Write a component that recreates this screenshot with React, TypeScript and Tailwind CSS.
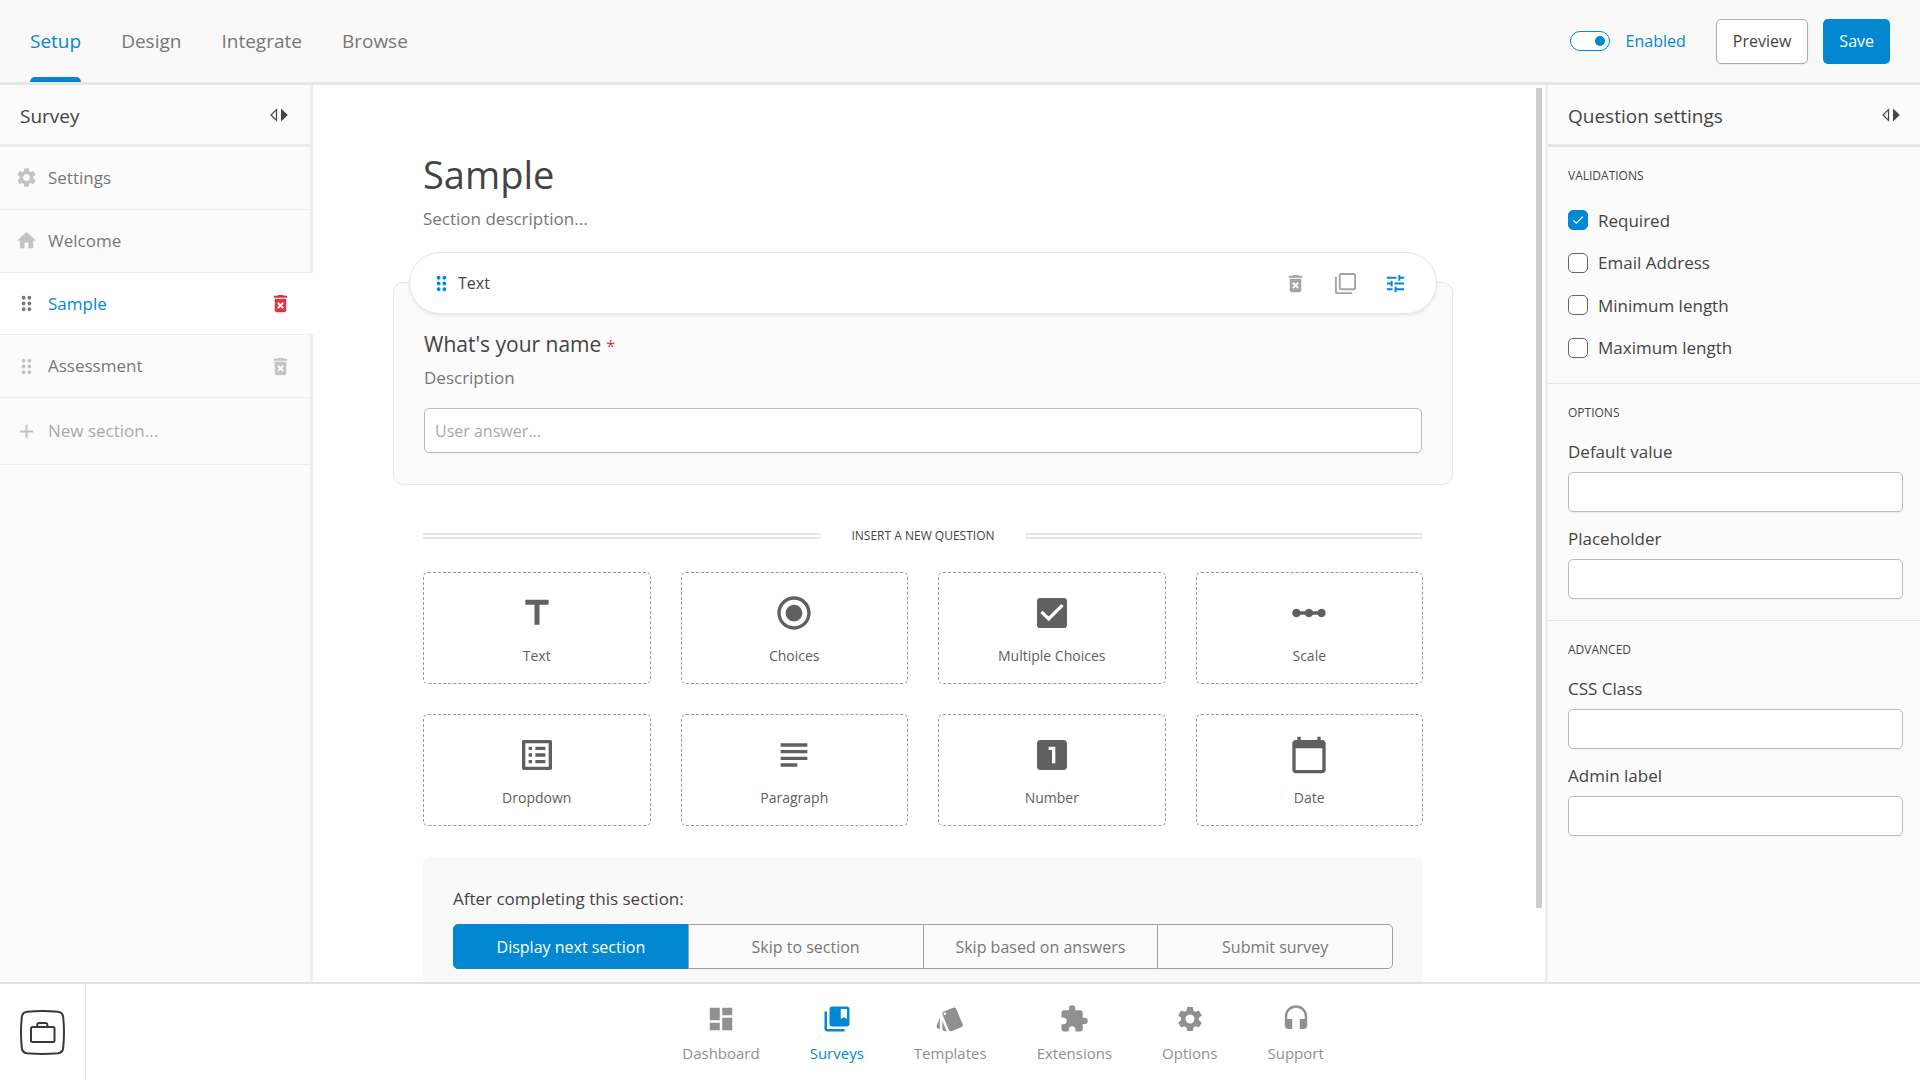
import { useState } from "react";
import type { ReactNode } from "react";
import type { IconType } from "react-icons";
import {
  MdAdd,
  MdCalendarToday,
  MdCheck,
  MdCheckBox,
  MdCollectionsBookmark,
  MdDashboard,
  MdDeleteForever,
  MdDragIndicator,
  MdExtension,
  MdFilterNone,
  MdHeadset,
  MdHome,
  MdLinearScale,
  MdListAlt,
  MdLooksOne,
  MdRadioButtonChecked,
  MdSettings,
  MdStyle,
  MdSubject,
  MdTitle,
  MdTune,
} from "react-icons/md";

const tabs = ["Setup", "Design", "Integrate", "Browse"];

const questionTypes: { label: string; icon: IconType }[] = [
  { label: "Text", icon: MdTitle },
  { label: "Choices", icon: MdRadioButtonChecked },
  { label: "Multiple Choices", icon: MdCheckBox },
  { label: "Scale", icon: MdLinearScale },
  { label: "Dropdown", icon: MdListAlt },
  { label: "Paragraph", icon: MdSubject },
  { label: "Number", icon: MdLooksOne },
  { label: "Date", icon: MdCalendarToday },
];

const navItems: { label: string; icon: IconType }[] = [
  { label: "Dashboard", icon: MdDashboard },
  { label: "Surveys", icon: MdCollectionsBookmark },
  { label: "Templates", icon: MdStyle },
  { label: "Extensions", icon: MdExtension },
  { label: "Options", icon: MdSettings },
  { label: "Support", icon: MdHeadset },
];

const nextSteps = ["Display next section", "Skip to section", "Skip based on answers", "Submit survey"];

function CollapseIcon() {
  return (
    <svg width="18" height="14" viewBox="0 0 18 14" aria-hidden="true">
      <path d="M6.5 1.6v10.8L1 7z" fill="none" stroke="#444" strokeWidth="1.2" />
      <path d="M11 0.5v13L17.8 7z" fill="#444" />
    </svg>
  );
}

function Logo() {
  return (
    <svg width="45" height="45" viewBox="0 0 45 45" fill="none" stroke="#343a40" aria-hidden="true">
      <path
        d="M7 1.8Q22.5 0.2 38 1.8Q42.6 2.4 43.2 7Q44.8 22.5 43.2 38Q42.6 42.6 38 43.2Q22.5 44.8 7 43.2Q2.4 42.6 1.8 38Q0.2 22.5 1.8 7Q2.4 2.4 7 1.8Z"
        strokeWidth="2"
      />
      <rect x="11" y="17" width="23.5" height="15" rx="1.5" strokeWidth="2" />
      <path d="M17.3 17v-2.2q0-1.8 1.8-1.8h6.4q1.8 0 1.8 1.8V17" strokeWidth="2" />
    </svg>
  );
}

function PanelHeader({ title, label, className }: { title: string; label: string; className: string }) {
  return (
    <div className={`flex h-[62px] shrink-0 items-center justify-between border-b-[3px] pl-5 ${className}`}>
      <h2 className="pt-0.5 text-[19px] leading-7 text-[#444]">{title}</h2>
      <button type="button" aria-label={label}>
        <CollapseIcon />
      </button>
    </div>
  );
}

function SectionItem({
  icon: Icon,
  label,
  active = false,
  removable = false,
}: {
  icon: IconType;
  label: string;
  active?: boolean;
  removable?: boolean;
}) {
  return (
    <li
      className={
        active
          ? "relative z-10 -mr-[3px] flex items-center border-b border-[#eee] bg-white pr-[21px] pl-[15px]"
          : "flex items-center border-b border-[#eee] pr-[18px] pl-[15px]"
      }
    >
      <a href="#" className="flex flex-1 items-center gap-[10px]">
        <Icon size={23} className={active ? "text-[#777]" : "text-[#c3c3c3]"} />
        <span className={active ? "text-[17px] text-[#0288d1]" : "text-[17px] text-[#777]"}>{label}</span>
      </a>
      {removable && (
        <button type="button" aria-label={`Delete ${label}`} className={active ? "text-[#dc3545]" : "text-[#c3c3c3]"}>
          <MdDeleteForever size={23} />
        </button>
      )}
    </li>
  );
}

function CheckRow({ label, defaultChecked = false }: { label: string; defaultChecked?: boolean }) {
  return (
    <label className="flex items-center gap-[10px] text-[17px] text-[#444]">
      <span className="relative h-5 w-5">
        <input
          type="checkbox"
          defaultChecked={defaultChecked}
          className="peer block h-5 w-5 appearance-none rounded-[5px] border border-[#666] bg-white checked:border-[#0288d1] checked:bg-[#0288d1]"
        />
        <MdCheck size={14} className="pointer-events-none absolute top-[3px] left-[3px] hidden text-white peer-checked:block" />
      </span>
      {label}
    </label>
  );
}

function SettingsGroup({ title, children, last = false }: { title: string; children: ReactNode; last?: boolean }) {
  return (
    <section className={last ? "pt-[19px] pr-[17px] pb-5 pl-5" : "border-b border-[#e6e6e6] pt-[19px] pr-[17px] pl-5"}>
      <h3 className="text-xs leading-5 text-[#444] uppercase">{title}</h3>
      {children}
    </section>
  );
}

function Field({ label }: { label: string }) {
  return (
    <label className="block text-[17px] leading-6 text-[#444]">
      {label}
      <input
        type="text"
        className="mt-2 block h-10 w-full rounded-[5px] border border-[#bbb] bg-white px-3 shadow-[0_1px_1px_rgba(0,0,0,0.05)]"
      />
    </label>
  );
}

export default function App() {
  const [tab, setTab] = useState("Setup");
  const [step, setStep] = useState("Display next section");

  return (
    <div className="flex h-screen flex-col bg-white font-['Open_Sans',sans-serif] text-[#444]">
      <header className="flex h-[85px] shrink-0 items-stretch justify-between border-b-[3px] border-[#e6e6e6] bg-[#f9f9f9] px-[30px]">
        <nav className="flex gap-10">
          {tabs.map((name) => (
            <button
              key={name}
              type="button"
              onClick={() => setTab(name)}
              className={
                name === tab
                  ? "flex flex-col items-stretch text-[19px] text-[#0288d1]"
                  : "flex flex-col items-stretch text-[19px] text-[#777]"
              }
            >
              <span className="flex flex-1 items-center pt-1.5">{name}</span>
              <span className={name === tab ? "h-[5px] rounded-t-[5px] bg-[#0288d1]" : "h-[5px]"} />
            </button>
          ))}
        </nav>
        <div className="flex items-center">
          <label className="mr-[30px] flex items-center gap-4 text-base text-[#0288d1]">
            <input
              type="checkbox"
              role="switch"
              defaultChecked
              className="flex h-5 w-10 appearance-none items-center rounded-full border border-[#0288d1] bg-white px-1 before:h-[10px] before:w-[10px] before:rounded-full before:bg-[#0288d1] checked:justify-end"
            />
            Enabled
          </label>
          <button
            type="button"
            className="mr-[15px] h-[45px] rounded-[5px] border border-[#aaa] bg-white px-4 text-base text-[#444] shadow-[0_1px_2px_rgba(0,0,0,0.06)]"
          >
            Preview
          </button>
          <button type="button" className="h-[45px] rounded-[5px] bg-[#0288d1] px-4 text-base text-white">
            Save
          </button>
        </div>
      </header>

      <div className="flex min-h-0 flex-1">
        <aside className="w-[313px] shrink-0 border-r-[3px] border-[#eee] bg-[#fbfbfb]">
          <PanelHeader title="Survey" label="Collapse survey panel" className="border-[#eee] pr-[22px]" />
          <ul className="grid h-[251px] grid-rows-4">
            <SectionItem icon={MdSettings} label="Settings" />
            <SectionItem icon={MdHome} label="Welcome" />
            <SectionItem icon={MdDragIndicator} label="Sample" active removable />
            <SectionItem icon={MdDragIndicator} label="Assessment" removable />
          </ul>
          <label className="flex h-[67px] items-center gap-[10px] border-b border-[#eee] pr-[18px] pl-[15px] text-[17px]">
            <MdAdd size={23} className="shrink-0 text-[#c3c3c3]" />
            <input
              type="text"
              aria-label="New section"
              placeholder="New section..."
              className="w-full bg-transparent text-[#444] outline-none placeholder:text-[#aaa]"
            />
          </label>
        </aside>

        <main className="flex min-w-0 flex-1">
          <div className="flex-1 overflow-y-auto px-[30px] pt-16 [scrollbar-width:none]">
            <div className="mx-auto max-w-[1000px] pb-10">
              <h1 className="text-[38px] leading-[50px]">Sample</h1>
              <p className="mt-2 text-[17px] leading-6 text-[#777]">Section description...</p>

              <article className="-mx-[30px] mt-[51px] rounded-[10px] border border-[#e6e6e6] bg-[#fbfbfb] pb-[31px]">
                <div className="mx-[15px] -mt-[31px] flex h-[62px] items-center rounded-full border border-[#e6e6e6] bg-white pr-[29px] pl-5 shadow-[0_2px_3px_rgba(0,0,0,0.07)]">
                  <MdDragIndicator size={23} className="text-[#0288d1]" />
                  <span className="ml-[5px] flex-1 text-base">Text</span>
                  <div className="flex gap-[27px] text-[#a5a5a5]">
                    <button type="button" aria-label="Delete question">
                      <MdDeleteForever size={23} />
                    </button>
                    <button type="button" aria-label="Duplicate question">
                      <MdFilterNone size={23} />
                    </button>
                    <button type="button" aria-label="Question settings" className="text-[#0288d1]">
                      <MdTune size={23} />
                    </button>
                  </div>
                </div>
                <div className="px-[30px] pt-4">
                  <label htmlFor="answer" className="block text-[21px] leading-7">
                    What's your name<span className="ml-[5px] text-base text-[#dc3545]">*</span>
                  </label>
                  <p className="mt-2 text-[17px] leading-6 text-[#777]">Description</p>
                  <input
                    id="answer"
                    type="text"
                    placeholder="User answer..."
                    className="mt-[18px] block h-[45px] w-full rounded-[5px] border border-[#bbb] bg-white px-[10px] text-base shadow-[0_1px_1px_rgba(0,0,0,0.05)] placeholder:text-[#aaa]"
                  />
                </div>
              </article>

              <div className="mt-[41px] flex items-center gap-[30px]">
                <span className="h-[6px] flex-1 border-y-2 border-[#e6e6e6]" />
                <h2 className="text-xs leading-5 uppercase">Insert a new question</h2>
                <span className="h-[6px] flex-1 border-y-2 border-[#e6e6e6]" />
              </div>

              <div className="mt-[26px] grid grid-cols-4 gap-[30px]">
                {questionTypes.map(({ label, icon: Icon }) => (
                  <button
                    key={label}
                    type="button"
                    className="flex h-[112px] flex-col items-center rounded-[5px] border border-dashed border-[#999] pt-5 text-sm text-[#606060]"
                  >
                    <Icon size={40} />
                    <span className="mt-[13px] leading-5">{label}</span>
                  </button>
                ))}
              </div>

              <section className="mt-[31px] rounded-[7px] bg-[#f9f9f9] p-[30px]">
                <h2 className="text-[17px] leading-6">After completing this section:</h2>
                <div className="mt-[13px] flex">
                  {nextSteps.map((name) => (
                    <button
                      key={name}
                      type="button"
                      aria-pressed={name === step}
                      onClick={() => setStep(name)}
                      className={
                        name === step
                          ? "h-[45px] flex-1 border border-[#0288d1] bg-[#0288d1] text-base text-white first:rounded-l-[5px] last:rounded-r-[5px]"
                          : "-ml-px h-[45px] flex-1 border border-[#a0a0a0] bg-[#fbfbfb] text-base text-[#777] first:ml-0 first:rounded-l-[5px] last:rounded-r-[5px]"
                      }
                    >
                      {name}
                    </button>
                  ))}
                </div>
              </section>
            </div>
          </div>
          <div className="flex w-3 shrink-0 flex-col pt-[3px] pl-[3px]" aria-hidden="true">
            <div className="h-11/12 w-[6px] bg-[#ccc]" />
          </div>
        </main>

        <aside className="w-[375px] shrink-0 overflow-y-auto border-l-[3px] border-[#eee] bg-[#fbfbfb]">
          <PanelHeader title="Question settings" label="Collapse settings panel" className="border-[#e6e6e6] pr-5" />
          <SettingsGroup title="Validations">
            <div className="mt-[13px] mb-[14px] grid h-[170px] grid-rows-4">
              <CheckRow label="Required" defaultChecked />
              <CheckRow label="Email Address" />
              <CheckRow label="Minimum length" />
              <CheckRow label="Maximum length" />
            </div>
          </SettingsGroup>
          <SettingsGroup title="Options">
            <div className="flex flex-col gap-[15px] pt-[17px] pb-[21px]">
              <Field label="Default value" />
              <Field label="Placeholder" />
            </div>
          </SettingsGroup>
          <SettingsGroup title="Advanced" last>
            <div className="flex flex-col gap-[15px] pt-[17px]">
              <Field label="CSS Class" />
              <Field label="Admin label" />
            </div>
          </SettingsGroup>
        </aside>
      </div>

      <footer className="flex h-[98px] shrink-0 border-t-2 border-[#e2e2e2] bg-white">
        <a href="#" aria-label="Home" className="flex w-[86px] shrink-0 items-center justify-center border-r border-[#e6e6e6]">
          <Logo />
        </a>
        <nav className="flex flex-1 justify-center gap-[50px] pt-5">
          {navItems.map(({ label, icon: Icon }) => (
            <a
              key={label}
              href="#"
              className={
                label === "Surveys"
                  ? "flex flex-col items-center text-[15px] text-[#0288d1]"
                  : "flex flex-col items-center text-[15px] text-[#909090]"
              }
            >
              <Icon size={30} />
              <span className="mt-[9px] leading-5">{label}</span>
            </a>
          ))}
        </nav>
      </footer>
    </div>
  );
}
